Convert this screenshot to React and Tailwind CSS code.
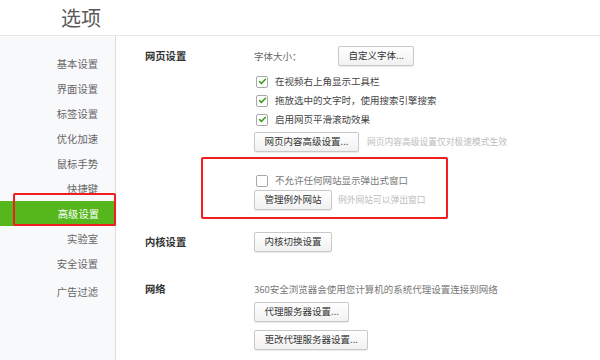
import { Check } from 'lucide-react';

const font = { fontFamily: '"Noto Sans CJK SC", "Noto Sans", sans-serif' };

function Btn({ children, className = '' }) {
  return (
    <button
      className={`h-[20px] px-[9.5px] text-[9.5px] leading-none text-[#333] bg-gradient-to-b from-white to-[#f1f1f1] border border-[#c9c9c9] rounded-[2px] shadow-[0_1px_1px_rgba(0,0,0,0.08)] whitespace-nowrap ${className}`}
    >
      {children}
    </button>
  );
}

function Box({ checked, label, muted }) {
  return (
    <div className="h-[19px] flex items-center">
      <div className="w-[12px] h-[12px] ml-[2px] border border-[#a9a9a9] rounded-[2px] bg-white flex items-center justify-center">
        {checked && <Check className="w-[9px] h-[9px] text-[#3a9d1c]" strokeWidth={4} />}
      </div>
      <span className={`ml-[7px] text-[9.5px] ${muted ? 'text-[#777]' : 'text-[#444]'}`}>{label}</span>
    </div>
  );
}

export default function App() {
  const menu = ['基本设置', '界面设置', '标签设置', '优化加速', '鼠标手势', '快捷键', '高级设置', '实验室', '安全设置', '广告过滤'];

  return (
    <div className="w-[600px] h-[360px] bg-white overflow-hidden relative" style={font}>
      {/* Header */}
      <div className="h-[36px] border-b border-[#e6e6e6] flex items-center pl-[61px]">
        <span className="text-[20px] text-[#5a5a5a] leading-none">选项</span>
      </div>

      <div className="flex h-[324px]">
        {/* Sidebar */}
        <div className="w-[116px] shrink-0 bg-[#f8f9fb] border-r border-[#dcdcdc] pt-[15px]">
          {menu.map((m, i) => (
            <div
              key={m}
              className={`h-[25px] flex items-center justify-end pr-[17px] text-[10.3px] ${
                m === '高级设置' ? 'bg-[#55b71c] text-white mr-[-1px]' : 'text-[#666]'
              } ${i === 9 ? 'mt-[3px]' : ''}`}
            >
              {m}
            </div>
          ))}
        </div>

        {/* Content */}
        <div className="flex-1 pl-[29px] pt-[10px] text-[#333]">
          {/* 网页设置 */}
          <div className="flex">
            <div className="w-[109px] h-[20px] flex items-center text-[10.3px] font-bold text-[#333]">网页设置</div>
            <div className="flex flex-col">
              <div className="flex items-center h-[20px]">
                <span className="text-[9.5px] text-[#666] w-[84px]">字体大小：</span>
                <Btn>自定义字体...</Btn>
              </div>
              <div className="mt-[6px]">
                <Box checked label="在视频右上角显示工具栏" />
                <Box checked label="拖放选中的文字时，使用搜索引擎搜索" />
                <Box checked label="启用网页平滑滚动效果" />
              </div>
              <div className="flex items-center mt-[3px]">
                <Btn>网页内容高级设置...</Btn>
                <span className="ml-[8px] text-[8.75px] text-[#bdbdbd]">网页内容高级设置仅对极速模式生效</span>
              </div>
              <div className="mt-[19px]">
                <Box label="不允许任何网站显示弹出式窗口" muted />
              </div>
              <div className="flex items-center">
                <Btn>管理例外网站</Btn>
                <span className="ml-[6px] text-[8.75px] text-[#bdbdbd]">例外网站可以弹出窗口</span>
              </div>
            </div>
          </div>

          {/* 内核设置 */}
          <div className="flex mt-[22px]">
            <div className="w-[109px] h-[20px] flex items-center text-[10.3px] font-bold text-[#333]">内核设置</div>
            <Btn>内核切换设置</Btn>
          </div>

          {/* 网络 */}
          <div className="flex mt-[28px]">
            <div className="w-[109px] h-[18px] flex items-center text-[10.3px] font-bold text-[#333]">网络</div>
            <div className="flex flex-col items-start">
              <div className="h-[18px] flex items-center text-[9.5px] text-[#777]">360安全浏览器会使用您计算机的系统代理设置连接到网络</div>
              <Btn className="mt-[4px]">代理服务器设置...</Btn>
              <Btn className="mt-[8px]">更改代理服务器设置...</Btn>
            </div>
          </div>
        </div>
      </div>

      {/* Annotation boxes */}
      <div className="absolute left-[13px] top-[193px] w-[103px] h-[33px] border-2 border-[#f01e1e] rounded-[2px]" />
      <div className="absolute left-[201px] top-[157px] w-[247px] h-[62px] border-2 border-[#f01e1e] rounded-[2px]" />
    </div>
  );
}
